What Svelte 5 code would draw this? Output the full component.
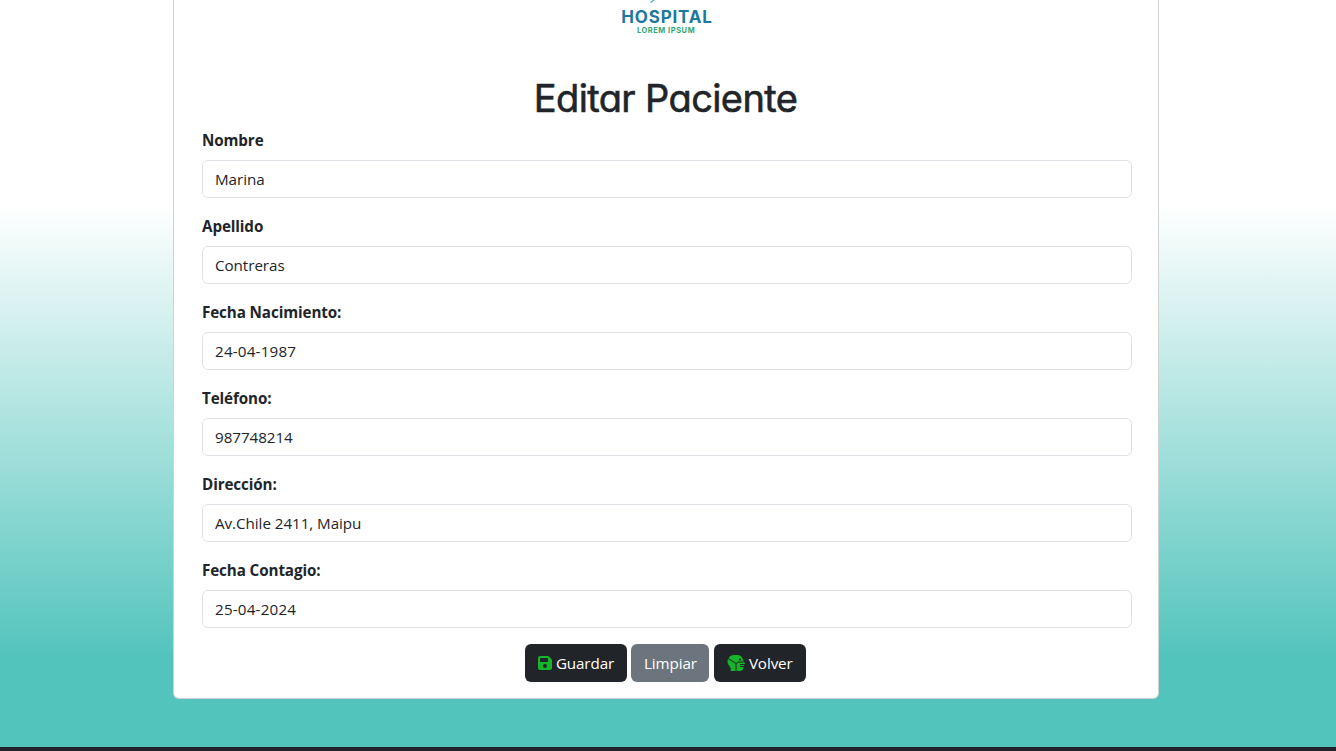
<script>
  const fields = $state([
    { id: 'nombre', label: 'Nombre', value: 'Marina' },
    { id: 'apellido', label: 'Apellido', value: 'Contreras' },
    { id: 'nacimiento', label: 'Fecha Nacimiento:', value: '24-04-1987', wide: true },
    { id: 'telefono', label: 'Teléfono:', value: '987748214' },
    { id: 'direccion', label: 'Dirección:', value: 'Av.Chile 2411, Maipu' },
    { id: 'contagio', label: 'Fecha Contagio:', value: '25-04-2024', wide: true }
  ]);
</script>

<div class="page">
  <main class="card">
    <div class="logo">
      <svg class="leaf" width="12" height="4" viewBox="0 0 12 4"><path d="M5.500 2.500 9 0" stroke="#35b8b0" stroke-width="1.200" fill="none" /></svg>
      <span class="brand">HOSPITAL</span>
      <span class="tagline">LOREM IPSUM</span>
    </div>
    <h1>Editar Paciente</h1>
    <form>
      {#each fields as f (f.id)}
        <div class="field">
          <label for={f.id}>{f.label}</label>
          <input id={f.id} class:wide={f.wide} type="text" bind:value={f.value} />
        </div>
      {/each}
      <div class="actions">
        <button type="button" class="dark save">
          <svg width="14" height="16" viewBox="0 0 448 512"><path d="M64 32C28.700 32 0 60.700 0 96V416c0 35.300 28.700 64 64 64H384c35.300 0 64-28.700 64-64V173.300c0-17-6.700-33.300-18.700-45.300L352 50.700C340 38.700 323.700 32 306.700 32H64zm0 96c0-17.700 14.300-32 32-32H288c17.700 0 32 14.300 32 32v64c0 17.700-14.300 32-32 32H96c-17.700 0-32-14.300-32-32V128zM224 288a64 64 0 1 1 0 128 64 64 0 1 1 0-128z" /></svg>
          <span>Guardar</span>
        </button>
        <button type="button" class="gray"><span>Limpiar</span></button>
        <button type="button" class="dark back">
          <svg width="18" height="16" viewBox="0 0 576 512">
            <path d="M32 128 274 281V512H118V440C118 404 102 382 74 350 14 280 0 198 32 128Z" />
            <path d="M48 100C88 36 148 0 224 0H330C420 0 492 60 508 142L536 208H372L292 255Z" />
            <path d="M306 281 377 240H556L574 265C580 278 574 288 564 288H424C402 288 402 320 424 320H556L544 352H424C402 352 402 384 424 384H534L516 440C504 480 470 512 426 512H306Z" />
            <circle cx="416" cy="144" r="32" class="eye" />
          </svg>
          <span>Volver</span>
        </button>
      </div>
    </form>
  </main>
  <footer></footer>
</div>

<style>
  :global(body) { margin: 0; background: #fff; }
  * { box-sizing: border-box; }
  .page {
    height: 751px;
    overflow: hidden;
    display: flex;
    flex-direction: column;
    align-items: center;
    background: linear-gradient(#fff 205px, #52c4bc 658px);
    color: #212529;
    font: 400 16px/24px "Open Sans", "Noto Sans", sans-serif;
  }
  .card {
    width: 986px;
    height: 699px;
    margin-right: 4px;
    flex: none;
    padding: 0 26px 0 28px;
    background: #fff;
    border: 1px solid rgba(0, 0, 0, 0.175);
    border-top: 0;
    border-radius: 0 0 6px 6px;
  }
  .logo {
    height: 72px;
    display: flex;
    flex-direction: column;
    align-items: center;
    font-family: Inter, sans-serif;
    font-weight: 700;
  }
  .leaf { display: block; margin-right: 33px; flex: none; }
  .brand { font-size: 17px; line-height: 20px; margin: 3px 0 0; letter-spacing: 0.8px; color: #20789c; }
  .tagline { font-size: 7.4px; line-height: 8px; margin: 0 2px 0 0; letter-spacing: 0.6px; color: #2fa672; }
  h1 {
    margin: 0 0 8px;
    height: 48px;
    text-align: center;
    font: 400 38px/52px Inter, sans-serif;
    font-feature-settings: "cv11";
    letter-spacing: -0.62px;
    -webkit-text-stroke: 0.6px #212529;
    padding-right: 3px;
    white-space: nowrap;
  }
  .field { height: 86px; }
  label { display: block; margin-bottom: 8px; font-weight: 700; font-size: 15.2px; letter-spacing: -0.1px; }
  input {
    display: block;
    width: 100%;
    height: 38px;
    padding: 6px 12px;
    border: 1px solid #dee2e6;
    border-radius: 6px;
    background: #fff;
    color: #212529;
    font: inherit;
    font-size: 15.2px;
    letter-spacing: -0.05px;
    outline: none;
  }
  .wide { letter-spacing: 0.2px; }
  .actions { display: flex; gap: 4.4px; margin-left: 323px; }
  button {
    height: 38px;
    padding: 0;
    display: flex;
    align-items: center;
    justify-content: center;
    gap: 4px;
    border: 0;
    border-radius: 6px;
    color: #fff;
    font: inherit;
    font-size: 15.2px;
    letter-spacing: -0.1px;
  }
  .save { width: 102px; }
  .gray { width: 78px; background: #6c757d; }
  .back { width: 92px; }
  .dark { background: #212529; }
  svg { fill: #16b32b; flex: none; }
  .eye { fill: #212529; }
  footer { width: 100%; height: 4px; margin-top: auto; background: #212529; flex: none; }
</style>
